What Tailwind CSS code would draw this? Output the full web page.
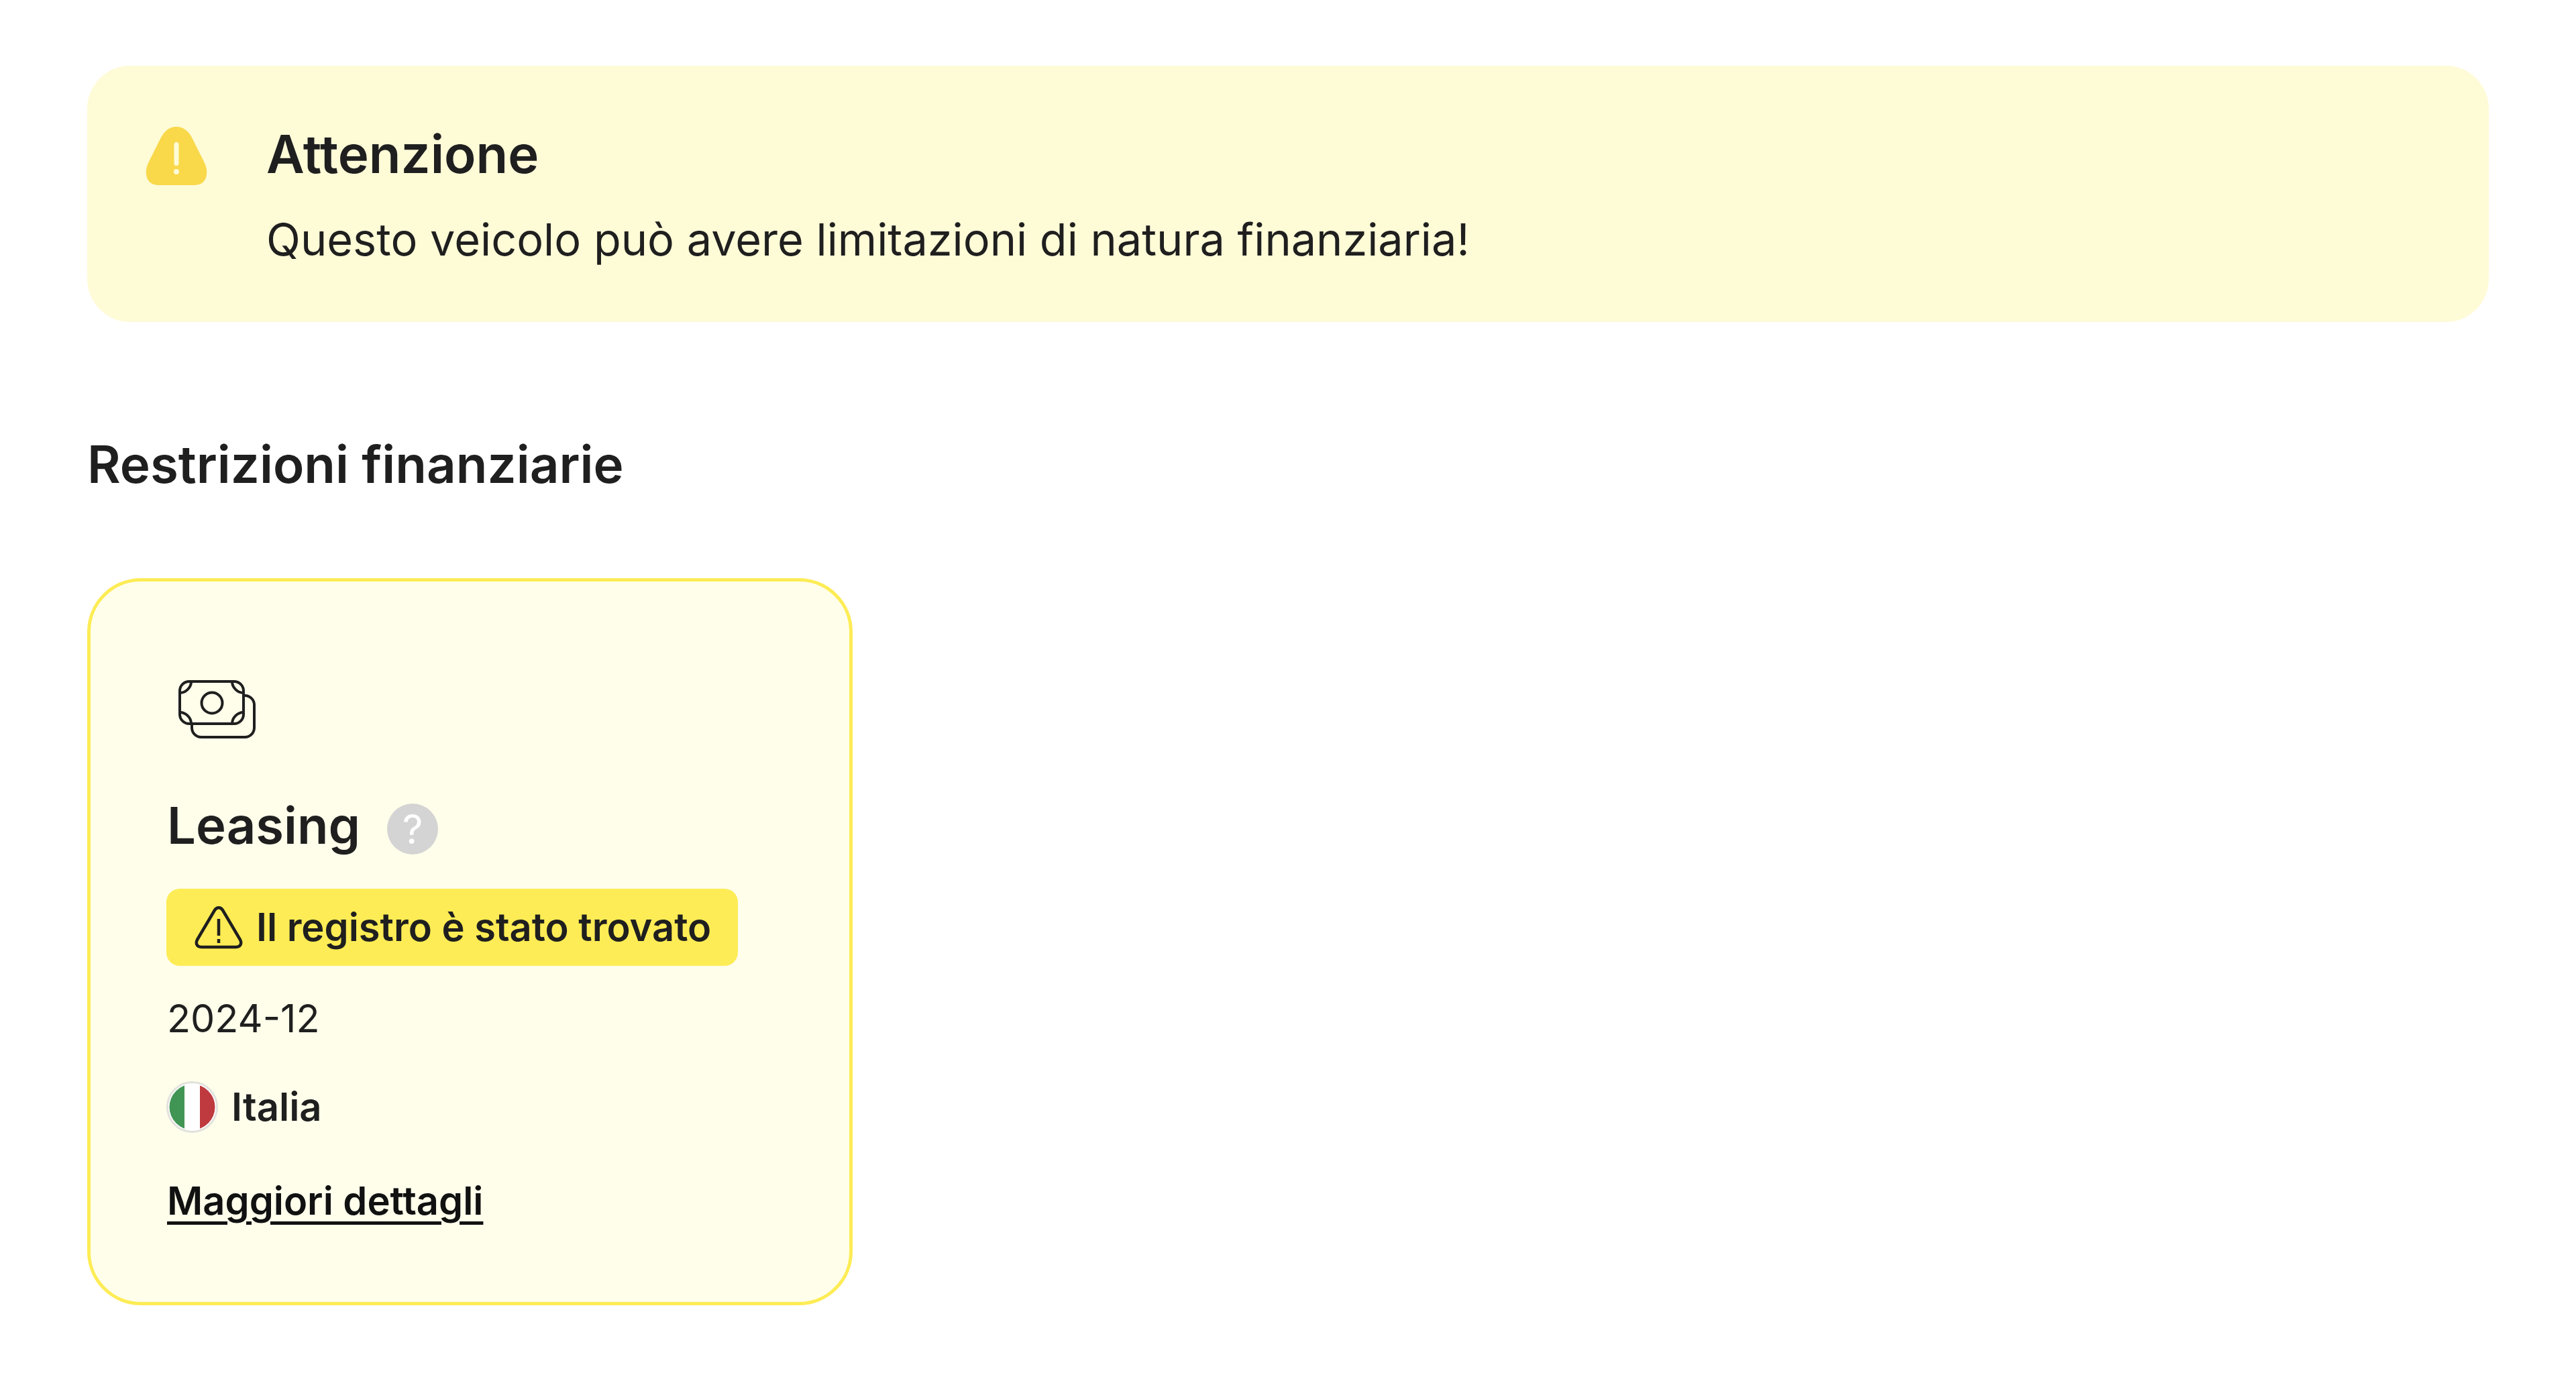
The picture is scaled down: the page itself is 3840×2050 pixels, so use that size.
<!DOCTYPE html>
<html lang="it">
<head>
  <meta charset="UTF-8">
  <title>Restrizioni finanziarie</title>
  <script src="https://cdn.jsdelivr.net/npm/@tailwindcss/browser@4"></script>
</head>
<body class="bg-white text-[#1f1f1f] font-['Inter',sans-serif]">
  <main class="px-[130px] pt-[98px]">
    <!-- alert -->
    <section class="flex h-[382px] rounded-[64px] bg-[#fefbd7] pt-[82px] pl-[86px]">
      <svg class="mt-[8px] h-[90px] w-[94px]" viewBox="0 0 94 90">
        <path fill="#f9d84a" d="M47 1C36 1 29 8 24 17L5 55C-2 70 2 88 20 88H74C92 88 96 70 89 55L70 17C65 8 58 1 47 1Z"/>
        <rect x="43.500" y="24" width="7" height="35" rx="3.500" fill="#fefbd7"/>
        <circle cx="47" cy="68" r="4" fill="#fefbd7"/>
      </svg>
      <div class="ml-[87px]">
        <h2 class="text-[78px] leading-[100px] font-semibold">Attenzione</h2>
        <p class="mt-[32px] text-[66.600px] leading-[90px]">Questo veicolo può avere limitazioni di natura finanziaria!</p>
      </div>
    </section>

    <h3 class="mt-[162px] text-[76.300px] leading-[100px] font-semibold">Restrizioni finanziarie</h3>

    <!-- card -->
    <article class="mt-[120px] h-[1084px] w-[1141px] rounded-[80px] border-[5px] border-[#fdec55] bg-[#fffeeb] pt-[146px] pl-[114px]">
      <svg class="ml-[16px] h-[90px] w-[118px]" viewBox="0 0 118 90" fill="none" stroke="#1f1f1f" stroke-width="4">
        <rect x="3" y="3" width="95" height="63" rx="14"/>
        <path d="M98 24h2a14 14 0 0 1 14 14v34a14 14 0 0 1-14 14H35a14 14 0 0 1-14-14v-6"/>
        <circle cx="51" cy="35" r="15.500"/>
        <path d="M20 3C20 12 12 20 3 20M81 3C81 12 89 20 98 20M20 66C20 57 12 49 3 49M81 66C81 57 89 49 98 49"/>
      </svg>

      <div class="mt-[82px] flex h-[90px] items-center">
        <span class="text-[76px] leading-[90px] font-semibold">Leasing</span>
        <span class="ml-[40px] mt-[11px] flex h-[76px] w-[76px] items-center justify-center rounded-full bg-[#d4d4d4] text-[60px] font-normal text-white">?</span>
      </div>

      <div class="mt-[50px] -ml-[1px] flex h-[115px] w-[852px] items-center rounded-[20px] bg-[#fdec55] pl-[42px]">
        <svg class="h-[64px] w-[72px]" viewBox="0 0 72 64" fill="none" stroke="#1f1f1f" stroke-width="4.500" stroke-linejoin="round">
          <path d="M30 6C33 1 39 1 42 6L68 50C71 56 68 61 62 61H10C4 61 1 56 4 50Z"/>
          <path d="M36 19V44M36 49V55"/>
        </svg>
        <span class="ml-[20px] text-[57.800px] font-semibold">Il registro è stato trovato</span>
      </div>

      <p class="mt-[38px] text-[57.500px] leading-[80px]">2024-12</p>

      <div class="mt-[54px] -ml-[1px] flex h-[77px] items-center">
        <svg class="h-[77px] w-[77px]" viewBox="0 0 77 77">
          <defs><clipPath id="flag"><circle cx="38.500" cy="38.500" r="34"/></clipPath></defs>
          <circle cx="38.500" cy="38.500" r="37" fill="#ffffff" stroke="#e2e2dd" stroke-width="3"/>
          <g clip-path="url(#flag)">
            <rect x="0" y="0" width="27" height="77" fill="#419554"/>
            <rect x="50" y="0" width="27" height="77" fill="#bf3a3f"/>
          </g>
        </svg>
        <span class="ml-[20px] text-[58px] font-semibold">Italia</span>
      </div>

      <a href="#" class="mt-[61px] block text-[57.800px] leading-[80px] font-semibold text-[#111] underline underline-offset-[10px] decoration-[5px]">Maggiori dettagli</a>
    </article>
  </main>
</body>
</html>
